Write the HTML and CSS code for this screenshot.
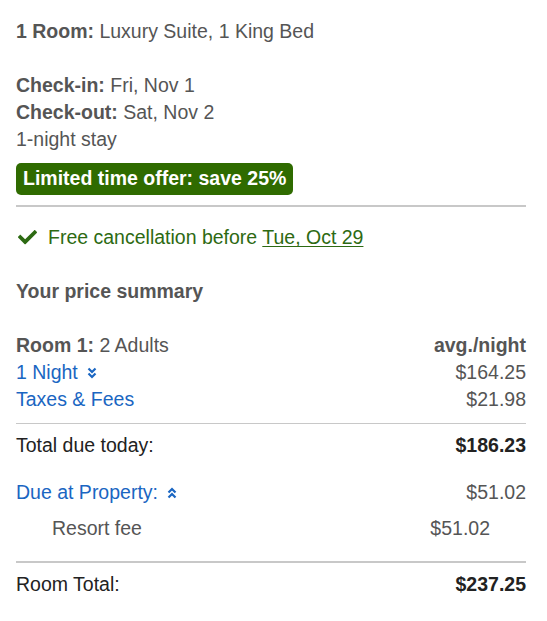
FILE: index.html
```html
<!DOCTYPE html>
<html lang="en">
<head>
<meta charset="utf-8">
<title>Price summary</title>
<link rel="stylesheet" href="styles.css">
</head>
<body>
<div class="summary">
  <div class="room"><b>1 Room:</b> Luxury Suite, 1 King Bed</div>
  <div class="dates">
    <div><b>Check-in:</b> Fri, Nov 1</div>
    <div><b>Check-out:</b> Sat, Nov 2</div>
    <div>1-night stay</div>
  </div>
  <div class="badge">Limited time offer: save 25%</div>
  <hr class="divider">
  <div class="cancel">
    <svg class="check" viewBox="0 0 512 400" width="19" height="15"><path fill="#2d6a12" d="M173.9 375.4L7.5 209c-10-10-10-26.2 0-36.2l36.2-36.2c10-10 26.2-10 36.2 0L192 248.7 432.1 8.6c10-10 26.2-10 36.2 0l36.2 36.2c10 10 10 26.2 0 36.2L210.1 375.4c-10 10-26.2 10-36.2 0z"/></svg>
    <span>Free cancellation before <u>Tue, Oct 29</u></span>
  </div>
  <div class="heading">Your price summary</div>
  <div class="rows">
    <div class="row"><span><b>Room 1:</b> 2 Adults</span><b>avg./night</b></div>
    <div class="row"><span class="link">1 Night <svg class="chev" viewBox="0 0 10 12" width="10" height="12"><path d="M1.5 1.5L5 5l3.5-3.5M1.5 6.5L5 10l3.5-3.5" fill="none" stroke="#1a66c2" stroke-width="2.2"/></svg></span><span>$164.25</span></div>
    <div class="row"><span class="link">Taxes &amp; Fees</span><span>$21.98</span></div>
  </div>
  <hr class="thin">
  <div class="row total"><span>Total due today:</span><b>$186.23</b></div>
  <div class="row property"><span class="link">Due at Property: <svg class="chev" viewBox="0 0 10 12" width="10" height="12"><path d="M1.5 5.5L5 2l3.5 3.5M1.5 10.5L5 7l3.5 3.5" fill="none" stroke="#1a66c2" stroke-width="2.2"/></svg></span><span>$51.02</span></div>
  <div class="row resort"><span>Resort fee</span><span>$51.02</span></div>
  <hr class="thick">
  <div class="row total"><span>Room Total:</span><b>$237.25</b></div>
</div>
</body>
</html>
```
FILE: styles.css
```css
html, body {
  margin: 0;
  background: #fff;
}
body {
  font-family: "Liberation Sans", Arial, sans-serif;
  font-size: 19.5px;
  line-height: 27px;
  color: #555;
}
.summary {
  width: 510px;
  padding: 18px 0 20px 16px;
}
b { font-weight: bold; }
.dates {
  margin-top: 27px;
}
.badge {
  display: inline-block;
  margin-top: 10px;
  background: #2f6b00;
  color: #fff;
  font-weight: bold;
  border-radius: 5px;
  padding: 2px 7px 3px 7px;
  line-height: 27px;
}
hr {
  border: 0;
  margin: 0;
}
.divider {
  margin-top: 10px;
  border-top: 2px solid #c8c8c8;
}
.cancel {
  margin-top: 17px;
  color: #2d6a12;
  display: flex;
  align-items: center;
  gap: 11px;
  padding-left: 2px;
}
.cancel u { text-decoration-thickness: 1px; text-underline-offset: 2px; }
.heading {
  margin-top: 27px;
  font-weight: bold;
}
.rows {
  margin-top: 27px;
}
.row {
  display: flex;
  justify-content: space-between;
  align-items: center;
}
.link {
  color: #1a66c2;
  display: inline-flex;
  align-items: center;
}
.chev { margin-left: 9px; }
.thin {
  margin-top: 10px;
  border-top: 1px solid #c8c8c8;
}
.total {
  margin-top: 8px;
  color: #222;
}
.property {
  margin-top: 20px;
}
.resort {
  margin-top: 9px;
  padding: 0 36px;
}
.thick {
  margin-top: 19px;
  border-top: 2px solid #c8c8c8;
}
```
